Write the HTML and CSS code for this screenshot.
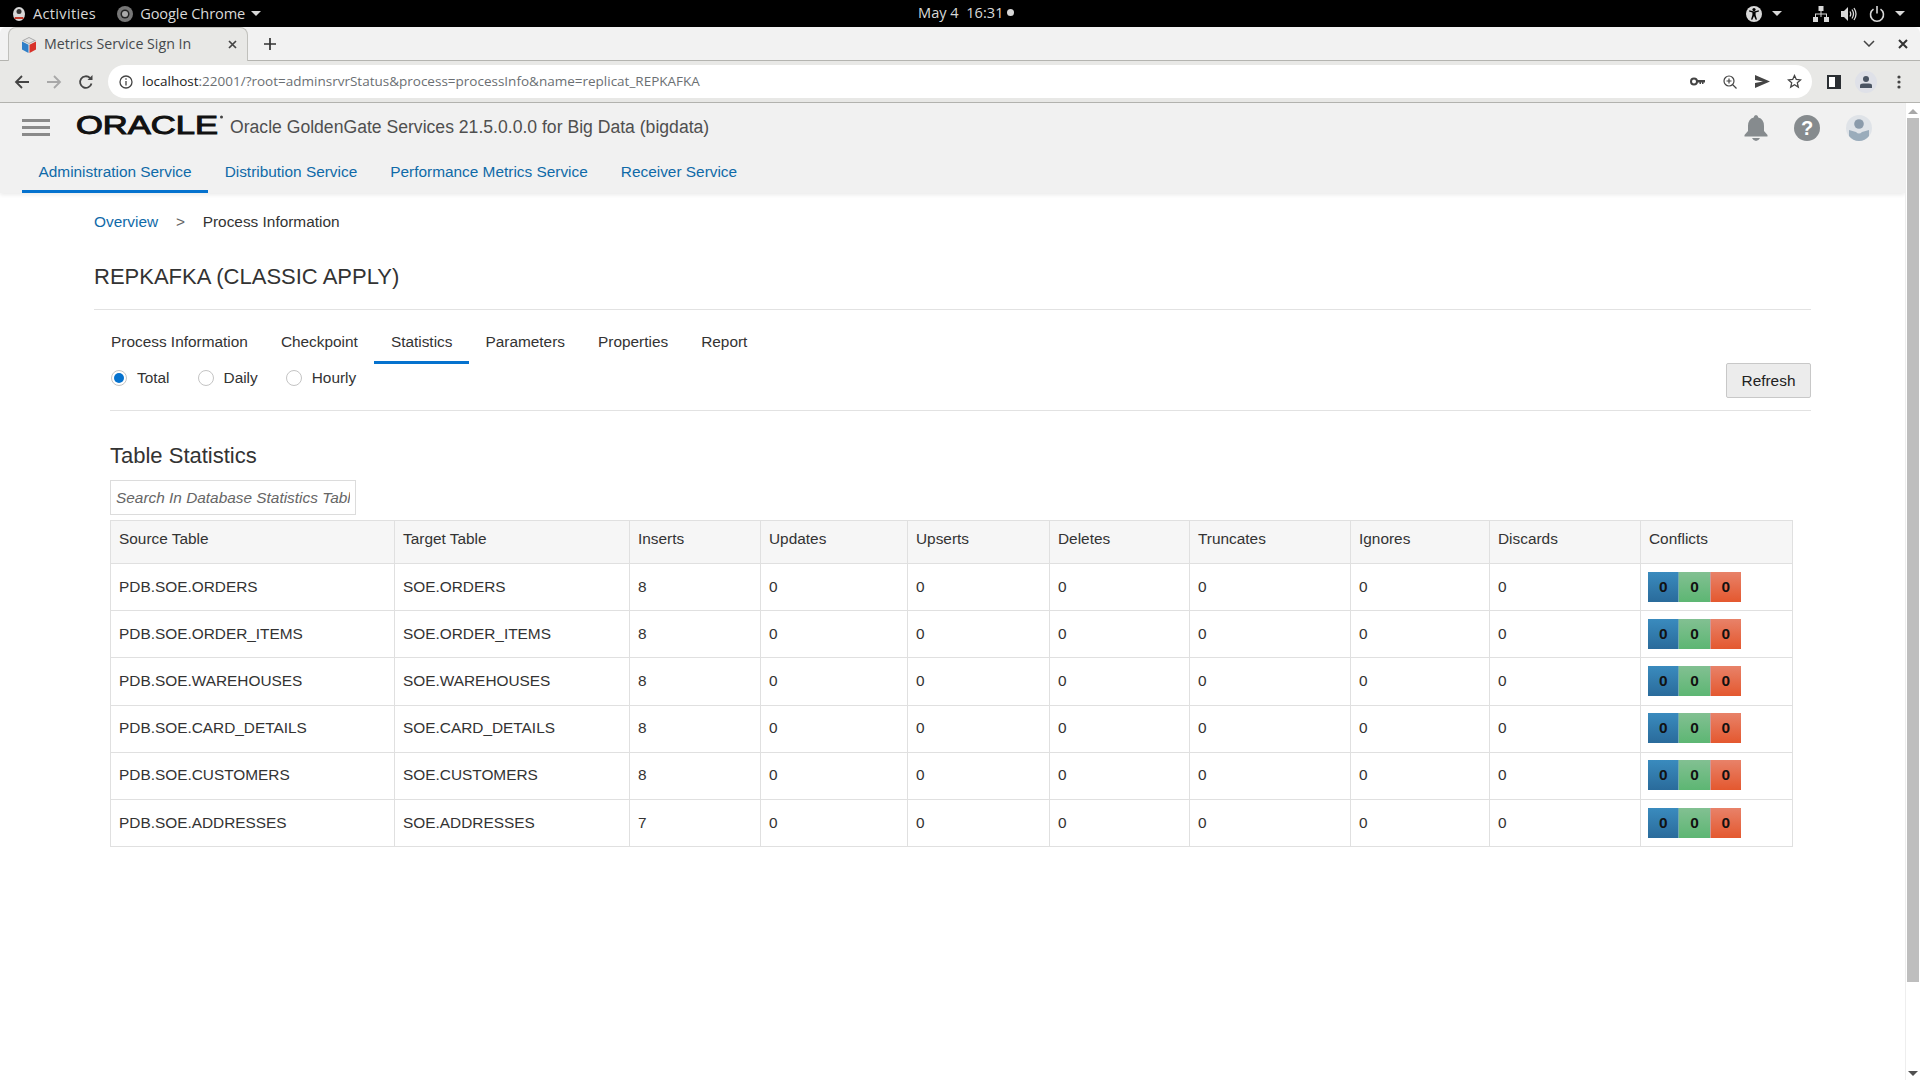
FILE: index.html
```html
<!DOCTYPE html>
<html lang="en">
<head>
    <meta charset="UTF-8">
    <title>Metrics Service Sign In</title>
    <link rel="stylesheet" href="styles.css">
</head>
<body>
    <!-- desktop top bar -->
    <div class="topbar">
        <div class="topbar-left">
            <svg class="ico-activities" width="14" height="16" viewBox="0 0 14 16"><ellipse cx="7" cy="8" rx="6" ry="7" fill="#d8d8d8"/><circle cx="7" cy="5.500" r="2.500" fill="#333"/><path d="M3 11h8l1 2H2z" fill="#c0392b"/></svg>
            <span class="top-label activities">Activities</span>
            <svg class="ico-chrome" width="16" height="16" viewBox="0 0 16 16"><circle cx="8" cy="8" r="8" fill="#777"/><circle cx="8" cy="8" r="4.500" fill="#222"/><circle cx="8" cy="8" r="3" fill="#aaa"/></svg>
            <span class="top-label app-name">Google Chrome</span>
            <span class="caret"></span>
        </div>
        <div class="clock">May 4&nbsp; 16:31 <span class="clock-dot"></span></div>
        <div class="topbar-right">
            <svg class="sys-a11y" width="16" height="16" viewBox="0 0 16 16"><circle cx="8" cy="8" r="8" fill="#d8d8d8"/><circle cx="8" cy="3.600" r="1.600" fill="#000"/><path d="M3 5.400l3.400 1V9l-1.400 4.400 1.300.4L8 10l1.700 3.800 1.300-.4L9.600 9V6.400L13 5.400l-.3-1.100L8 5.500 3.300 4.300z" fill="#000"/></svg>
            <span class="caret sys-caret1"></span>
            <svg class="sys-net" width="16" height="16" viewBox="0 0 16 16" fill="#d8d8d8"><rect x="5.500" y="0" width="5" height="5"/><rect x="0" y="11" width="5" height="5"/><rect x="11" y="11" width="5" height="5"/><path d="M7.500 5h1v2.500h5.500V11h-1V8.500H8.500V11h-1V8.500H3V11H2V7.500h5.500z"/></svg>
            <svg class="sys-vol" width="16" height="16" viewBox="0 0 16 16" fill="none" stroke="#d8d8d8"><path d="M0 5h3l4-4v14l-4-4H0z" fill="#d8d8d8" stroke="none"/><path d="M9 5.500q1.500 2.500 0 5M11 3.500q3 4.500 0 9M13 2q4 6 0 12" stroke-width="1.300"/></svg>
            <svg class="sys-pow" width="16" height="16" viewBox="0 0 16 16" fill="none" stroke="#d8d8d8" stroke-width="1.600"><path d="M4.500 3.200a6.500 6.500 0 1 0 7 0M8 0v7.500"/></svg>
            <span class="caret sys-caret2"></span>
        </div>
    </div>

    <!-- browser tab strip -->
    <div class="tabstrip">
        <div class="tab">
            <svg class="favicon" width="16" height="16" viewBox="0 0 16 16"><path d="M8 0l7 3.500L8 7 1 3.500z" fill="#a9a9a9"/><path d="M3 3.500L8 1l5 2.500L8 6z" fill="#e4e4e4"/><path d="M1 4.500l6.500 3.300V16L1 12.500z" fill="#2f7fc8"/><path d="M15 4.500L8.500 7.800V16l6.500-3.500z" fill="#d8322a"/></svg>
            <span class="tab-title">Metrics Service Sign In</span>
            <svg class="tab-x" width="9" height="9" viewBox="0 0 9 9" stroke="#444" stroke-width="1.700"><path d="M1 1l7 7M8 1L1 8"/></svg>
        </div>
        <svg class="tab-plus" width="12" height="12" viewBox="0 0 12 12" stroke="#333" stroke-width="1.700"><path d="M6 0v12M0 6h12"/></svg>
        <svg class="strip-chevron" width="12" height="7" viewBox="0 0 12 7" fill="none" stroke="#444" stroke-width="1.500"><path d="M1 1l5 5 5-5"/></svg>
        <svg class="strip-x" width="10" height="10" viewBox="0 0 10 10" stroke="#333" stroke-width="2"><path d="M1 1l8 8M9 1L1 9"/></svg>
    </div>

    <!-- browser toolbar -->
    <div class="toolbar">
        <svg class="tb-back" width="16" height="14" viewBox="0 0 16 14" fill="none" stroke="#444" stroke-width="1.800"><path d="M15 7H2M8 1L2 7l6 6"/></svg>
        <svg class="tb-fwd" width="16" height="14" viewBox="0 0 16 14" fill="none" stroke="#a8a8a8" stroke-width="1.800"><path d="M1 7h13M8 1l6 6-6 6"/></svg>
        <svg class="tb-reload" width="16" height="16" viewBox="0 0 16 16" fill="none" stroke="#444" stroke-width="1.800"><path d="M13.500 9.500A5.800 5.800 0 1 1 12 4"/><path d="M14.500 1v5h-5z" fill="#444" stroke="none"/></svg>
        <div class="omnibox">
            <svg class="omni-info" width="14" height="14" viewBox="0 0 14 14" fill="none" stroke="#444" stroke-width="1.300"><circle cx="7" cy="7" r="6"/><path d="M7 6v4.500M7 3.300v1.400"/></svg>
            <span class="url"><span class="url-host">localhost</span>:22001/?root=adminsrvrStatus&amp;process=processInfo&amp;name=replicat_REPKAFKA</span>
            <svg class="omni-key" width="15" height="9" viewBox="0 0 15 9"><circle cx="4" cy="4.500" r="3" fill="none" stroke="#444" stroke-width="2"/><path d="M6.500 3H15v2.500h-1.500V7H12V5.500h-1V7H9.500V5.500h-3z" fill="#444"/></svg>
            <svg class="omni-zoom" width="14" height="14" viewBox="0 0 14 14" fill="none" stroke="#444" stroke-width="1.200"><circle cx="6" cy="6" r="5"/><path d="M9.500 9.500L13.500 13.500M6 3.500v5M3.500 6h5"/></svg>
            <svg class="omni-send" width="15" height="13" viewBox="0 0 15 13"><path d="M0 0l15 6.500L0 13V8l8-1.500L0 5z" fill="#444"/></svg>
            <svg class="omni-star" width="15" height="15" viewBox="0 0 15 15" fill="none" stroke="#444" stroke-width="1.300"><path d="M7.500 1.500l1.800 4 4.300.4-3.300 2.900 1 4.300-3.800-2.300-3.800 2.300 1-4.300-3.300-2.900 4.300-.4z"/></svg>
        </div>
        <svg class="tb-panel" width="14" height="14" viewBox="0 0 14 14"><rect width="14" height="14" fill="#2b2f33"/><rect x="2" y="2" width="6" height="10" fill="#fff"/></svg>
        <div class="tb-avatar">
            <svg width="12" height="12" viewBox="0 0 12 12" fill="#4b5563"><circle cx="6" cy="3" r="3"/><path d="M0 12V9.500Q0 7.500 3 7.500h6q3 0 3 2V12z"/></svg>
        </div>
        <svg class="tb-dots" width="4" height="14" viewBox="0 0 4 14" fill="#444"><circle cx="2" cy="2" r="1.600"/><circle cx="2" cy="7" r="1.600"/><circle cx="2" cy="12" r="1.600"/></svg>
    </div>

    <div class="viewport">
        <div class="page">
            <header class="app-header">
                <div class="brand-row">
                    <div class="hamburger"><span></span><span></span><span></span></div>
                    <svg class="oracle-logo" width="150" height="26" viewBox="0 0 150 26">
                        <text x="1" y="22" textLength="142" lengthAdjust="spacingAndGlyphs" class="oracle-text">ORACLE</text>
                        <circle cx="146.500" cy="5" r="1.500" fill="#444"/>
                    </svg>
                    <span class="product">Oracle GoldenGate Services 21.5.0.0.0 for Big Data (bigdata)</span>
                    <div class="header-icons">
                        <svg class="ico-bell" width="24" height="26" viewBox="0 0 24 26" fill="#868b8e"><path d="M12 0q2 0 2.300 2.500Q20 4 20 11v5l3.500 4v1.500H.5V20L4 16v-5q0-7 5.700-8.500Q10 0 12 0z"/><path d="M8 23h8q-1.500 3-4 3t-4-3z"/></svg>
                        <svg class="ico-help" width="26" height="26" viewBox="0 0 26 26"><circle cx="13" cy="13" r="13" fill="#868b8e"/><text x="13" y="20" text-anchor="middle" class="help-mark">?</text></svg>
                        <svg class="ico-user" width="26" height="26" viewBox="0 0 26 26"><circle cx="13" cy="13" r="13" fill="#dfe3e8"/><circle cx="13" cy="9" r="4.800" fill="#8b9bab"/><path d="M3 15l7 2q3 3 6 0l7-2v6q-4 5-10 5T3 21z" fill="#9aacbb"/></svg>
                    </div>
                </div>
                <nav class="app-nav">
                    <a class="app-nav-item active">Administration Service</a>
                    <a class="app-nav-item">Distribution Service</a>
                    <a class="app-nav-item">Performance Metrics Service</a>
                    <a class="app-nav-item">Receiver Service</a>
                </nav>
            </header>

            <main class="content">
                <div class="breadcrumb">
                    <a>Overview</a>
                    <span class="sep">&gt;</span>
                    <span>Process Information</span>
                </div>
                <h1 class="title">REPKAFKA (CLASSIC APPLY)</h1>

                <div class="inner">
                    <div class="inner-tabs">
                        <a class="inner-tab">Process Information</a>
                        <a class="inner-tab">Checkpoint</a>
                        <a class="inner-tab active">Statistics</a>
                        <a class="inner-tab">Parameters</a>
                        <a class="inner-tab">Properties</a>
                        <a class="inner-tab">Report</a>
                    </div>
                    <div class="filter-row">
                        <label class="radio checked"><span class="radio-dot"></span>Total</label>
                        <label class="radio"><span class="radio-dot"></span>Daily</label>
                        <label class="radio"><span class="radio-dot"></span>Hourly</label>
                        <button class="refresh">Refresh</button>
                    </div>

                    <h2 class="section-title">Table Statistics</h2>
                    <input class="search" type="text" placeholder="Search In Database Statistics Table">

                    <table class="stats">
                        <colgroup>
                            <col class="c1"><col class="c2"><col class="c3"><col class="c4"><col class="c5">
                            <col class="c6"><col class="c7"><col class="c8"><col class="c9"><col class="c10">
                        </colgroup>
                        <thead>
                            <tr>
                                <th>Source Table</th><th>Target Table</th><th>Inserts</th><th>Updates</th><th>Upserts</th>
                                <th>Deletes</th><th>Truncates</th><th>Ignores</th><th>Discards</th><th>Conflicts</th>
                            </tr>
                        </thead>
                        <tbody>
                            <tr><td>PDB.SOE.ORDERS</td><td>SOE.ORDERS</td><td>8</td><td>0</td><td>0</td><td>0</td><td>0</td><td>0</td><td>0</td><td><div class="conflicts"><span class="b">0</span><span class="g">0</span><span class="r">0</span></div></td></tr>
                            <tr><td>PDB.SOE.ORDER_ITEMS</td><td>SOE.ORDER_ITEMS</td><td>8</td><td>0</td><td>0</td><td>0</td><td>0</td><td>0</td><td>0</td><td><div class="conflicts"><span class="b">0</span><span class="g">0</span><span class="r">0</span></div></td></tr>
                            <tr><td>PDB.SOE.WAREHOUSES</td><td>SOE.WAREHOUSES</td><td>8</td><td>0</td><td>0</td><td>0</td><td>0</td><td>0</td><td>0</td><td><div class="conflicts"><span class="b">0</span><span class="g">0</span><span class="r">0</span></div></td></tr>
                            <tr><td>PDB.SOE.CARD_DETAILS</td><td>SOE.CARD_DETAILS</td><td>8</td><td>0</td><td>0</td><td>0</td><td>0</td><td>0</td><td>0</td><td><div class="conflicts"><span class="b">0</span><span class="g">0</span><span class="r">0</span></div></td></tr>
                            <tr><td>PDB.SOE.CUSTOMERS</td><td>SOE.CUSTOMERS</td><td>8</td><td>0</td><td>0</td><td>0</td><td>0</td><td>0</td><td>0</td><td><div class="conflicts"><span class="b">0</span><span class="g">0</span><span class="r">0</span></div></td></tr>
                            <tr><td>PDB.SOE.ADDRESSES</td><td>SOE.ADDRESSES</td><td>7</td><td>0</td><td>0</td><td>0</td><td>0</td><td>0</td><td>0</td><td><div class="conflicts"><span class="b">0</span><span class="g">0</span><span class="r">0</span></div></td></tr>
                        </tbody>
                    </table>
                </div>
            </main>
        </div>

        <div class="scrollbar">
            <span class="arrow-up"></span>
            <div class="thumb"></div>
            <span class="arrow-down"></span>
        </div>
    </div>
</body>
</html>
```

FILE: styles.css
```css
* {
    margin: 0;
    padding: 0;
    box-sizing: border-box;
}

html, body {
    height: 100%;
    overflow: hidden;
}

body {
    display: flex;
    flex-direction: column;
    font-family: 'Liberation Sans', Arial, sans-serif;
    font-size: 15.4px;
    color: #333;
    background: #fff;
}

/* desktop bar */
.topbar {
    height: 27px;
    background: #000;
    color: #d8d8d8;
    display: flex;
    align-items: center;
    position: relative;
    font-family: 'Open Sans', 'Noto Sans', sans-serif;
    font-size: 14.6px;
    flex: none;
}

.top-label {
    margin-top: -2px;
}

.activities {
    letter-spacing: 0.3px;
}

.app-name {
    letter-spacing: -0.1px;
}

.topbar-left {
    display: flex;
    align-items: center;
    padding-left: 12px;
}

.ico-activities {
    margin-right: 7px;
}

.ico-chrome {
    margin-left: 21px;
    margin-right: 7px;
}

.caret {
    width: 0;
    height: 0;
    border-left: 5px solid transparent;
    border-right: 5px solid transparent;
    border-top: 5px solid #d8d8d8;
    margin-left: 6px;
}

.clock {
    position: absolute;
    left: 918px;
    top: 2px;
    display: flex;
    align-items: center;
    gap: 4px;
}

.clock-dot {
    width: 7px;
    height: 7px;
    border-radius: 50%;
    background: #d8d8d8;
}

.topbar-right {
    margin-left: auto;
    display: flex;
    align-items: center;
    padding-right: 15px;
}

.sys-caret1 { margin-left: 10px; }
.sys-net { margin-left: 31px; }
.sys-vol { margin-left: 12px; }
.sys-pow { margin-left: 12px; }
.sys-caret2 { margin-left: 10px; }

/* browser tabs */
.tabstrip {
    height: 34px;
    background: #f2f2f2;
    border-bottom: 1px solid #b4b4b0;
    border-top-left-radius: 6px;
    border-top-right-radius: 6px;
    display: flex;
    align-items: center;
    padding-left: 8px;
    flex: none;
}

.tab {
    width: 240px;
    height: 34px;
    background: #e8e8e6;
    border: 1px solid #c0c0bc;
    border-bottom: none;
    border-radius: 8px 8px 0 0;
    display: flex;
    align-items: center;
    padding-left: 12px;
    margin-bottom: -1px;
}

.tab-title {
    font-family: 'Open Sans', 'Noto Sans', sans-serif;
    font-size: 14.2px;
    color: #45494d;
    margin-left: 7px;
    margin-top: -2px;
    width: 181px;
    white-space: nowrap;
}

.tab-x {
    margin-left: 3px;
}

.tab-plus {
    margin-left: 16px;
}

.strip-chevron {
    margin-left: auto;
}

.strip-x {
    margin-left: 23px;
    margin-right: 12px;
}

/* browser toolbar */
.toolbar {
    height: 42px;
    background: #e8e8e6;
    border-bottom: 1px solid #b4b4b0;
    display: flex;
    align-items: center;
    padding-left: 14px;
    flex: none;
}

.tb-fwd { margin-left: 16px; }
.tb-reload { margin-left: 16px; }

.omnibox {
    width: 1704px;
    height: 33px;
    margin-left: 14px;
    background: #fff;
    border-radius: 17px;
    display: flex;
    align-items: center;
    padding: 0 10px 0 11px;
}

.url {
    font-family: 'Open Sans', 'Noto Sans', sans-serif;
    font-size: 13.5px;
    color: #6b6f73;
    margin-left: 9px;
    margin-top: -2px;
    flex: 1;
    white-space: nowrap;
}

.url-host {
    color: #222;
}

.omni-zoom { margin-left: 18px; }
.omni-send { margin-left: 18px; }
.omni-star { margin-left: 17px; }

.tb-panel { margin-left: 15px; }

.tb-avatar {
    width: 22px;
    height: 22px;
    margin-left: 14px;
    border-radius: 50%;
    background: #dfe1e8;
    display: flex;
    align-items: center;
    justify-content: center;
}

.tb-dots { margin-left: 20px; }

/* page area */
.viewport {
    flex: 1;
    display: flex;
    min-height: 0;
}

.page {
    flex: 1;
    min-width: 0;
}

.scrollbar {
    width: 15px;
    background: #fff;
    border-left: 1px solid #eee;
    position: relative;
    flex: none;
}

.thumb {
    position: absolute;
    left: 1px;
    top: 15px;
    width: 12px;
    height: 864px;
    background: #bebebe;
}

.arrow-up, .arrow-down {
    position: absolute;
    left: 2px;
    width: 0;
    height: 0;
    border-left: 5px solid transparent;
    border-right: 5px solid transparent;
}

.arrow-up {
    top: 6px;
    border-bottom: 5px solid #a8a8a8;
}

.arrow-down {
    bottom: 4px;
    border-top: 5px solid #505050;
}

.app-header {
    height: 90px;
    background: #f1f1f1;
    box-shadow: 0 2px 4px rgba(0, 0, 0, 0.08);
    padding-left: 22px;
}

.brand-row {
    height: 49px;
    display: flex;
    align-items: center;
}

.hamburger {
    width: 28px;
    display: flex;
    flex-direction: column;
    gap: 4px;
}

.hamburger span {
    height: 3px;
    background: #8a8a8a;
}

.oracle-logo {
    margin-left: 25px;
    margin-top: -5px;
}

.oracle-text {
    font-family: 'Liberation Sans', Arial, sans-serif;
    font-size: 25px;
    fill: #111;
    stroke: #111;
    stroke-width: 1px;
}

.product {
    font-size: 17.6px;
    color: #4f4f4f;
    margin-left: 5px;
}

.header-icons {
    margin-left: auto;
    display: flex;
    align-items: center;
    gap: 25px;
    padding-right: 33px;
}

.ico-bell { margin-right: 1px; }
.ico-help { margin-right: 1px; }

.help-mark {
    font-family: 'Liberation Sans', Arial, sans-serif;
    font-weight: 700;
    font-size: 20px;
    fill: #fff;
}

.app-nav {
    display: flex;
    height: 41px;
}

.app-nav-item {
    padding: 0 16.5px;
    line-height: 40px;
    color: #0f6aa8;
    white-space: nowrap;
}

.app-nav-item.active {
    border-bottom: 3px solid #0572ce;
}

.content {
    padding: 0 94px;
    height: 887px;
}

.breadcrumb {
    padding-top: 20px;
    height: 56px;
    line-height: 18px;
    color: #333;
}

.breadcrumb a {
    color: #0f6aa8;
}

.breadcrumb .sep {
    margin: 0 13.5px;
    color: #666;
}

.title {
    font-size: 22px;
    font-weight: 400;
    line-height: 30px;
    color: #333;
    height: 48px;
    margin-top: 13px;
    border-bottom: 1px solid #e2e2e2;
}

.inner {
    padding-left: 16px;
}

.inner-tabs {
    display: flex;
    height: 54px;
    padding-top: 11px;
    margin-left: -15.5px;
}

.inner-tab {
    padding: 0 16.5px;
    line-height: 42px;
    height: 43px;
    color: #333;
    white-space: nowrap;
}

.inner-tab.active {
    border-bottom: 3px solid #0572ce;
}

.filter-row {
    display: flex;
    align-items: flex-start;
    height: 47px;
    border-bottom: 1px solid #e2e2e2;
    position: relative;
}

.radio {
    display: flex;
    align-items: center;
    height: 28px;
    margin-right: 27px;
    margin-left: 1px;
    color: #333;
}

.radio-dot {
    width: 16px;
    height: 16px;
    border-radius: 50%;
    border: 1px solid #c4c4c4;
    background: #fff;
    margin-right: 10px;
    position: relative;
}

.radio.checked .radio-dot::after {
    content: "";
    position: absolute;
    left: 2px;
    top: 2px;
    width: 10px;
    height: 10px;
    border-radius: 50%;
    background: #0572ce;
}

.refresh {
    margin-left: auto;
    margin-top: -1px;
    width: 85px;
    height: 35px;
    font-family: 'Liberation Sans', Arial, sans-serif;
    font-size: 15.4px;
    color: #222;
    background: #ececec;
    border: 1px solid #c8c8c8;
    border-radius: 2px;
}

.section-title {
    font-size: 22px;
    font-weight: 400;
    line-height: 30px;
    color: #333;
    margin-top: 30px;
}

.search {
    display: block;
    width: 246px;
    height: 35px;
    margin-top: 9px;
    padding: 0 5px;
    border: 1px solid #dcdcdc;
    font-family: 'Liberation Sans', Arial, sans-serif;
    font-size: 15.4px;
    font-style: italic;
}

.search::placeholder {
    color: #666;
    opacity: 1;
}

.stats {
    width: 1682px;
    margin-top: 5px;
    border-collapse: collapse;
    table-layout: fixed;
}

.c1 { width: 284px; }
.c2 { width: 235px; }
.c3 { width: 131px; }
.c4 { width: 147px; }
.c5 { width: 142px; }
.c6 { width: 140px; }
.c7 { width: 161px; }
.c8 { width: 139px; }
.c9 { width: 151px; }
.c10 { width: 152px; }

.stats th, .stats td {
    border: 1px solid #e0e0e0;
    padding: 0 8px;
    text-align: left;
    font-weight: 400;
    color: #333;
    white-space: nowrap;
}

.stats th {
    background: #f6f6f6;
    height: 43px;
    padding-bottom: 6px;
}

.stats td {
    height: 47.2px;
    padding-bottom: 1px;
}

.conflicts {
    display: flex;
    width: 93px;
    height: 30px;
    margin-left: -1px;
}

.conflicts span {
    flex: 1;
    text-align: center;
    line-height: 30px;
    font-size: 15.4px;
    font-weight: 700;
    color: #111;
}

.conflicts .b { background: linear-gradient(#3a8bbe, #2a6b9b); }
.conflicts .g { background: linear-gradient(#82c092, #5db673); border-left: 1px solid #6fa9b0; }
.conflicts .r { background: linear-gradient(#e88269, #e4582f); border-left: 1px solid #c99; }
```
